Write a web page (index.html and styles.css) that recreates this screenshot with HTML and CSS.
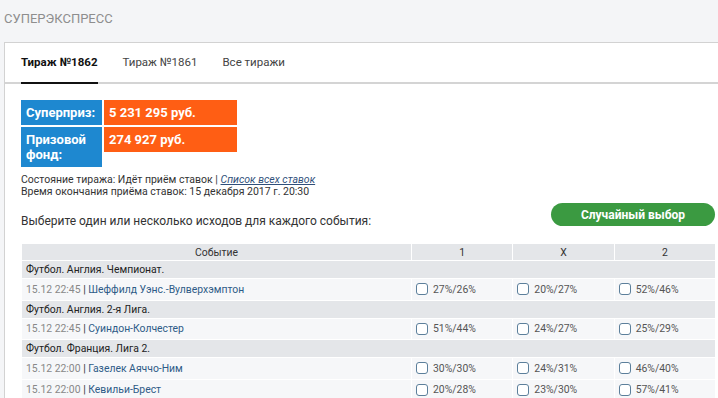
FILE: index.html
```html
<!DOCTYPE html>
<html lang="ru">
<head>
  <meta charset="UTF-8">
  <title>Суперэкспресс</title>
  <link rel="stylesheet" href="styles.css">
</head>
<body>
  <div class="top">Суперэкспресс</div>

  <div class="panel">
    <div class="tabs">
      <a class="tab active">Тираж №1862</a>
      <a class="tab">Тираж №1861</a>
      <a class="tab">Все тиражи</a>
    </div>

    <div class="content">
      <div class="prize">
        <div class="label">Суперприз:</div>
        <div class="sum">5 231 295 руб.</div>
        <div class="label">Призовой фонд:</div>
        <div class="sum">274 927 руб.</div>
      </div>

      <div class="status">
        Состояние тиража: Идёт приём ставок | <a class="all-bets">Список всех ставок</a><br>
        Время окончания приёма ставок: 15 декабря 2017 г. 20:30
      </div>

      <div class="pick">
        <span>Выберите один или несколько исходов для каждого события:</span>
        <button class="random">Случайный выбор</button>
      </div>

      <table class="events">
        <thead>
          <tr><th>Событие</th><th>1</th><th>X</th><th>2</th></tr>
        </thead>
        <tbody>
          <tr class="cat"><td colspan="4">Футбол. Англия. Чемпионат.</td></tr>
          <tr>
            <td><span class="time">15.12 22:45</span> | <a>Шеффилд Уэнс.-Вулверхэмптон</a></td>
            <td><label><i class="box"></i>27%/26%</label></td>
            <td><label><i class="box"></i>20%/27%</label></td>
            <td><label><i class="box"></i>52%/46%</label></td>
          </tr>
          <tr class="cat"><td colspan="4">Футбол. Англия. 2-я Лига.</td></tr>
          <tr>
            <td><span class="time">15.12 22:45</span> | <a>Суиндон-Колчестер</a></td>
            <td><label><i class="box"></i>51%/44%</label></td>
            <td><label><i class="box"></i>24%/27%</label></td>
            <td><label><i class="box"></i>25%/29%</label></td>
          </tr>
          <tr class="cat"><td colspan="4">Футбол. Франция. Лига 2.</td></tr>
          <tr>
            <td><span class="time">15.12 22:00</span> | <a>Газелек Аяччо-Ним</a></td>
            <td><label><i class="box"></i>30%/30%</label></td>
            <td><label><i class="box"></i>24%/31%</label></td>
            <td><label><i class="box"></i>46%/40%</label></td>
          </tr>
          <tr>
            <td><span class="time">15.12 22:00</span> | <a>Кевильи-Брест</a></td>
            <td><label><i class="box"></i>20%/28%</label></td>
            <td><label><i class="box"></i>23%/30%</label></td>
            <td><label><i class="box"></i>57%/41%</label></td>
          </tr>
        </tbody>
      </table>
    </div>
  </div>
</body>
</html>
```

FILE: styles.css
```css
body {
  margin: 0;
  background: #f4f5f7;
  font-family: Roboto, "Liberation Sans", sans-serif;
  color: #333;
}
.top {
  height: 42px;
  line-height: 38px;
  padding-left: 4px;
  font-size: 13px;
  text-transform: uppercase;
  color: #8e8e8e;
}
.panel {
  margin-left: 4px;
  background: #fff;
  border-top: 1px solid #d2d2d2;
  border-left: 1px solid #d2d2d2;
  height: 360px;
}
.tabs {
  display: flex;
  height: 39px;
  padding-left: 16px;
  border-bottom: 2px solid #d4d4d4;
}
.tab {
  margin-right: 25px;
  font-size: 11.5px;
  line-height: 39px;
  color: #444;
}
.tab.active {
  font-weight: bold;
  color: #111;
  border-bottom: 2px solid #111;
  margin-bottom: -2px;
}
.content {
  padding: 16px 2px 0 16px;
}
.prize {
  display: grid;
  grid-template-columns: 81px 133px;
  gap: 2px;
  font-size: 13px;
  font-weight: bold;
  color: #fff;
}
.prize .label {
  background: #1e88d0;
  padding: 5px 5px;
  line-height: 15px;
}
.prize .sum {
  background: #ff5e14;
  padding: 5px 5px;
  line-height: 15px;
  align-self: start;
}
.status {
  margin-top: 7px;
  font-size: 10.5px;
  line-height: 12px;
  color: #333;
}
.all-bets {
  font-style: italic;
  text-decoration: underline;
  color: #2f4f7a;
}
.pick {
  display: flex;
  align-items: flex-start;
  justify-content: space-between;
  margin-top: 5px;
  font-size: 12px;
  color: #333;
}
.pick span {
  margin-top: 11px;
  line-height: 14px;
}
.random {
  width: 164px;
  height: 23px;
  margin-right: 1px;
  border: none;
  border-radius: 12px;
  background: #3b9a41;
  color: #fff;
  font-family: Roboto, "Liberation Sans", sans-serif;
  font-size: 12px;
  font-weight: bold;
}
.events {
  width: 100%;
  margin-top: 15px;
  border-collapse: collapse;
  font-size: 10.4px;
}
.events th, .events td {
  border: 1px solid #fff;
  padding: 0 4px;
  text-align: left;
}
.events th {
  background: #e4e6e9;
  font-weight: normal;
  text-align: center;
  height: 16px;
  color: #333;
}
.events th:first-child {
  width: 381px;
}
.events td {
  background: #f6f7f9;
  height: 20.5px;
}
.events .cat td {
  background: #e4e6e9;
  height: 17px;
  color: #222;
}
.time {
  color: #888;
}
.events a {
  color: #2e5b87;
}
.events label {
  display: flex;
  align-items: center;
  color: #555;
}
.box {
  display: inline-block;
  width: 10px;
  height: 10px;
  margin-right: 5px;
  border: 1px solid #5c7f9b;
  border-radius: 3px;
  background: #fff;
}
```
